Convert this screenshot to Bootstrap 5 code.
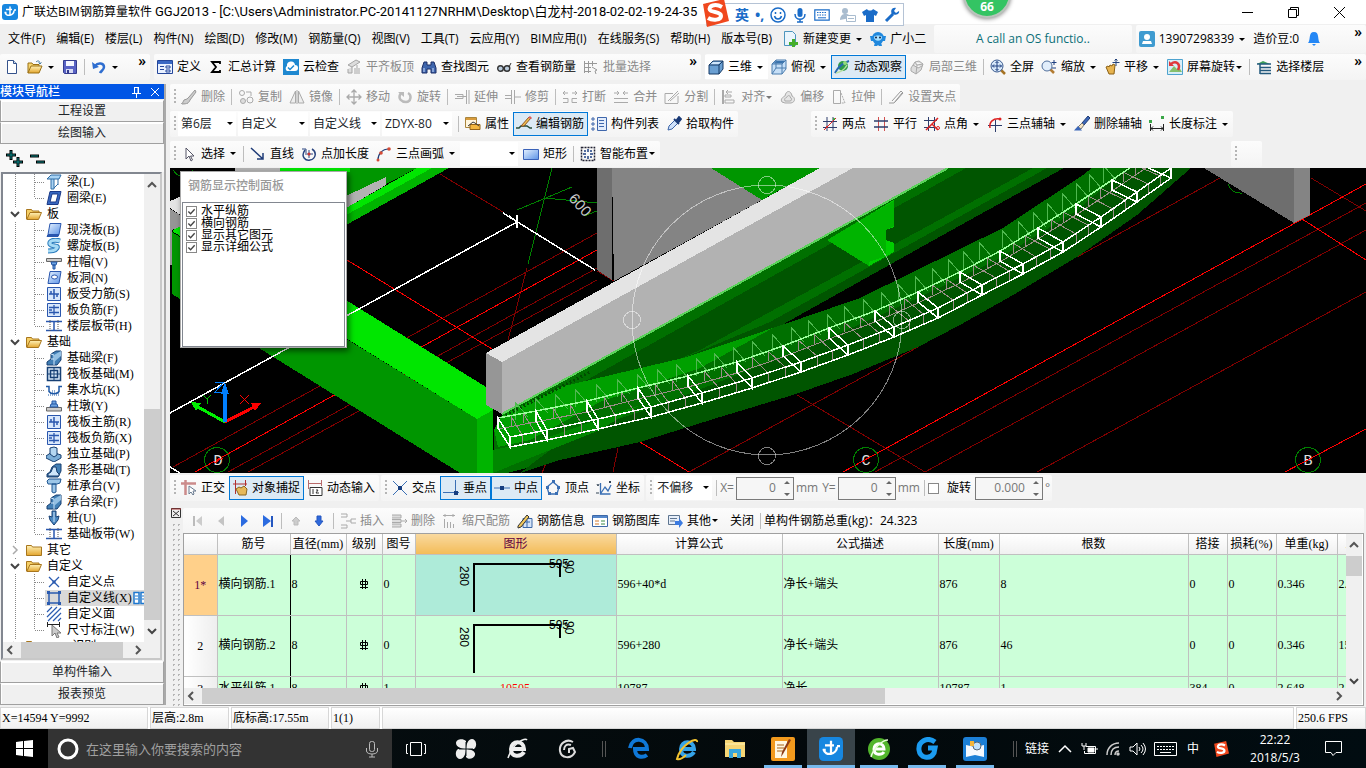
<!DOCTYPE html>
<html lang="zh-CN">
<head>
<meta charset="utf-8">
<meta name="viewport" content="width=device-width, initial-scale=1">
<title>广联达BIM钢筋算量软件 GGJ2013</title>
<link href="https://cdn.jsdelivr.net/npm/bootstrap@5.3.0/dist/css/bootstrap.min.css" rel="stylesheet">
<style>
:root{--ui:"Open Sans","Noto Sans CJK SC",sans-serif;--song:"Liberation Serif","Noto Sans CJK SC",serif}
body{font:12px/16px var(--ui);color:#000;background:#f0f0f0}
button,input,select{font:inherit;color:inherit}
svg{flex:none;display:block}
use{fill:none}
.ic{width:16px;height:16px}
.song{font-family:var(--song)}
.titlebar{height:24px;background:#fff;padding-left:2px;z-index:3}
.titlebar h1{font-size:12px;line-height:16px;font-weight:400}
.titlebar h1 span{font-family:Roboto,"Noto Sans CJK SC",sans-serif;font-size:13px}
.winbtn{width:46px;height:20px;padding:0;border:0;border-radius:0}
.ime{left:706px;top:3px;height:23px;background:#fff;border:1px solid #b5c3d5;padding:0 3px 0 28px;gap:6px;color:#1a6cc8}
.ime b{font-size:14px}
.imelogo{left:-6px;top:-5px}
.ball{left:963px;top:-30px;width:48px;height:48px;border:2px solid #b9c4bb;background:#34c463;color:#fff;font-weight:700;padding-top:27px;box-shadow:0 1px 4px #888}
.menubar{height:30px}
.menubar a{color:#000;text-decoration:none;margin-right:11px}
.menubar .strip{height:28px}
.strip{background:linear-gradient(#fcfcfc,#f4f4f4);height:26px;border-radius:2px}
.callout{color:#0b6f78}
.tb{--bs-btn-border-radius:0;display:inline-flex;align-items:center;gap:4px;height:24px;padding:0 4px 0 3px;border:0;font-size:12px;line-height:16px;color:#000;white-space:nowrap;flex:none}
.tb:disabled,.tb.off{opacity:1;color:#8a8a8a;border:0}
.tb.on{background:#dceaf5;box-shadow:inset 0 0 0 1px #0078d7}
.tb.whitebox{background:#fff}
.car{width:8px;display:flex;justify-content:center}
.car::after{content:"";border:3px solid transparent;border-top-color:#000;border-bottom:0}
.off .car::after{border-top-color:#777}
.tight{margin-left:-4px}
.vsep{width:1px;height:16px;background:#bdbdbd;margin:0 3px 0 2px;flex:none}
.grip{width:2px;height:16px;margin:0 2px 0 4px;flex:none;background:repeating-linear-gradient(#b5b5b5 0 2px,transparent 2px 4px)}
.more{font-size:14px;font-weight:600;line-height:12px;align-self:flex-start;padding:1px 4px;border:0;background:none}
.pick{height:24px;border:0;border-radius:0;padding:0 12px 0 3px;margin-right:2px;font-size:12px;line-height:16px;width:70px;background-color:#fff;background-size:6px 4px;background-position:right 3px center;--bs-form-select-bg-img:url("data:image/svg+xml,%3Csvg xmlns='http://www.w3.org/2000/svg' viewBox='0 0 6 4'%3E%3Cpath d='M0 0h6L3 3z'/%3E%3C/svg%3E")}
.pick.narrow{width:58px}
.side{width:166px;margin-bottom:2px;border-right:2px solid #a9a9a9;background:#f0f0f0}
.sidehead{height:15px;margin:0 0 1px;background:#0055e5;color:#fff;font-size:12px;line-height:15px}
.fold{height:22px;flex:none;border:1px solid #a0a0a0;border-top-color:#fff;box-shadow:inset 1px 1px #fff;border-radius:0;padding:0;font-size:12px;line-height:18px;background:#f0f0f0;width:100%}
.treebox{border:2px solid #828790;border-right-color:#c8c8c8;border-bottom-color:#c8c8c8;background:#fff;margin:0 2px 1px 1px}
.tree{line-height:16px;background:repeating-linear-gradient(#888 0 1px,transparent 1px 2px) 12px 0/1px 100% no-repeat}
.twig{height:16px;display:flex;align-items:center;white-space:nowrap}
.twig>.arrow{width:14px;height:14px;margin:0 4px 0 5px;background:#fff}
.twig>.ic{margin-right:5px}
.kids{padding-left:32px;background:repeating-linear-gradient(#888 0 1px,transparent 1px 2px) 31px 0/1px calc(100% - 8px) no-repeat}
.kids>li{height:16px;display:flex;align-items:center;white-space:nowrap}
.kids>li::before{content:"";width:10px;height:1px;flex:none;background:repeating-linear-gradient(90deg,#888 0 1px,transparent 1px 2px)}
.kids>li>.ic{margin:0 5px 0 1px}
.kids>li.sel{background:linear-gradient(#d9d9d9,#d9d9d9) 10px 0 no-repeat}
.vs{width:16px;background:#f0f0f0}
.hs{height:16px;background:#f0f0f0}
.thumb{background:#cdcdcd}
.scene{min-height:0;background:#000}
.float{left:10px;top:3px;width:167px;height:177px;background:#fff;border:1px solid #aaa;box-shadow:2px 3px 6px #0008}
.float h2{font-size:12px;line-height:16px;color:#9a9a9a;padding:6px 0 8px 7px;margin:0}
.float .box{border:1px solid #828790;margin:0 1px;padding:2px 3px}
.opt{height:12px;line-height:12px;display:flex;align-items:center;gap:4px}
.opt .form-check-input,.sq{width:11px;height:11px;margin:0;border:1px solid #888;border-radius:0!important;background-color:#fff}
.opt .form-check-input:checked{border-color:#888;background-color:#fff;--bs-form-check-bg-image:url("data:image/svg+xml,%3Csvg xmlns='http://www.w3.org/2000/svg' viewBox='0 0 10 10'%3E%3Cpath fill='none' stroke='%23444' stroke-width='1.5' d='M1.500 5l2.500 2.500 4.500-5'/%3E%3C/svg%3E")}
.snap{height:32px;padding:2px 0 4px 0}
.snap .strip{height:26px;margin-right:2px}
.num{height:23px;width:58px;border:1px solid #7a7a7a;background:#f6f6f6;color:#888}
.num.wide{width:68px}
.num input{width:100%;min-width:0;border:0;background:none;text-align:right;padding:0 5px 0 0;color:#777;font-size:12px;appearance:textfield;-moz-appearance:textfield}
.num input::-webkit-inner-spin-button{display:none}
.unit{color:#777;font-size:12px;padding:0 2px}
.sheet{height:202px;padding:3px 2px 1px 0}
.rail{width:10px;margin:0 2px 0 1px}
.dots{background:radial-gradient(circle,#b5b5b5 1px,transparent 1px) 0 0/5px 5px}
.sheet .strip{height:25px}
.frame{border:1px solid #a0a0a0;background:#fff;min-height:0;padding:0 1px 1px 0}
.grid{table-layout:fixed;width:1214px;border-collapse:collapse;font-family:var(--song);line-height:14px}
.grid th{height:20px;font-weight:400;text-align:center;background:linear-gradient(#fff,#f0f0f0);border:1px solid #c0c0c0;border-width:0 1px 1px 0;padding:0;white-space:nowrap;overflow:hidden}
.grid thead th{line-height:18px}
.grid td{height:61px;background:#ccffd9;border:1px solid #c0c0c0;border-width:0 1px 1px 0;padding:0 2px 2px 1px;white-space:nowrap}
.grid tbody th{background:linear-gradient(90deg,#fff,#eee)}
.grid .cur{background:linear-gradient(#f9d99f,#f3bc58);color:#600040}
.grid tbody th.cur{background:#ffd08a}
.grid td.hit{background:#aeebd9}
.grid .lock{border-right-color:#000}
.grid .last td,.grid .last th{height:26px}
.grid .alert-num{color:#f00;text-align:center}
.grid svg text{font:12px "Liberation Sans",sans-serif}
.c33{width:33px}.c36{width:36px}.c39{width:39px}.c49{width:49px}.c56{width:56px}.c61{width:61px}.c73{width:73px}.c156{width:156px}.c166{width:166px}.c189{width:189px}.c201{width:201px}
.status{height:22px;gap:2px;background:#fff}
.status span{border:1px solid #d7d7d7;background:linear-gradient(#fff,#f0f0f0);padding:2px 1px;white-space:nowrap}
.s50{width:49px}.s70{width:70px}.s78{width:79px}.s98{width:98px}.s148{width:148px}
.task{height:39px;background:linear-gradient(90deg,#060f12,#03090b 60%,#010c11);color:#fff}
.task .btn{border:0;border-radius:0;padding:0;height:39px;width:48px;flex:none;display:flex;align-items:center;justify-content:center;color:#fff;font-size:12px}
.task .btn.w50{width:51px}
.task .run{background:linear-gradient(#76b9ed,#76b9ed) center bottom/38px 3px no-repeat}
.task .now{background:linear-gradient(#76b9ed,#76b9ed) center bottom/48px 3px no-repeat #39444a}
.task .tray{width:24px}
.task .note{margin-right:21px}
.start{background:#000}
.find{width:344px;background:#333;padding:0 12px 0 8px;gap:4px}
.find input{border:0;background:none;min-width:0;color:#ccc;font-size:13px}
.find input::placeholder{color:#a0a0a0;opacity:1}
.clock{width:84px;line-height:18px;padding-right:8px}
.g24{width:24px;height:24px}
</style>
</head>
<body class="vh-100 d-flex flex-column overflow-hidden">

<svg width="0" height="0" class="position-absolute" aria-hidden="true">
<defs>
<linearGradient id="gb" x2="1" y2="1"><stop stop-color="#e6f2ff"/><stop offset="1" stop-color="#5c93e6"/></linearGradient>
<linearGradient id="gy" x2="0" y2="1"><stop stop-color="#fff2b8"/><stop offset="1" stop-color="#e3a52d"/></linearGradient>
</defs>
<g>
<symbol id="app" viewBox="0 0 16 16"><rect width="16" height="16" rx="3" fill="#1787e0"/><path d="M8 2.500v9M4 5.500h6M12 6.500c0 5-8 7-9 1.500M12 6h2M2.500 8.500h2" stroke="#fff" stroke-width="1.500"/></symbol>
<symbol id="new" viewBox="0 0 16 16"><path d="M3.500 1.500h6l3 3v10h-9z" fill="#fff" stroke="#35528c"/><path d="M9.500 1.500v3h3" stroke="#35528c" fill="#cde"/></symbol>
<symbol id="open" viewBox="0 0 16 16"><path d="M1 14V4h4l1 1.500h6V8" fill="#f7d670" stroke="#9a7116"/><path d="M1 14l3-7h11l-3 7z" fill="url(#gy)" stroke="#9a7116"/><path d="M9 3c2-2 4-1 4 1.500M11.500 3.500L13 5l1.500-1.500" stroke="#457ba3"/></symbol>
<symbol id="save" viewBox="0 0 16 16"><path d="M1.500 1.500h13v13h-12l-1-1z" fill="#5963c5" stroke="#343c8e"/><path d="M4 2h8v5H4z" fill="#f4f6ff"/><path d="M4 10h7v4H4z" fill="#d7daf4"/><path d="M5 11h2v3H5z" fill="#343c8e"/></symbol>
<symbol id="undo" viewBox="0 0 16 16"><path d="M4 7c3-4 9-3 9 1 0 3-3 4-4 6" stroke="#2f6ed0" stroke-width="2.500"/><path d="M1 3l1 7 6-2z" fill="#2f6ed0"/></symbol>
<symbol id="def" viewBox="0 0 16 16"><path d="M.500 1.500h15v13H.500z" fill="#e9f1ff" stroke="#24469a"/><path d="M1 2h14v3H1z" fill="#3a68c4"/><path d="M3 7.500h4M3 10.500h4M9 7h4v2H9zM9 11h4v2H9z" stroke="#24469a"/></symbol>
<symbol id="sum" viewBox="0 0 16 16"><path d="M12 5V3H4l4 5-4 5h8v-2" stroke="#000" stroke-width="1.800"/></symbol>
<symbol id="cloud" viewBox="0 0 16 16"><rect width="16" height="16" fill="#1e88d0"/><path d="M4 12a3 3 0 010-5 4 4 0 018-1 3 3 0 010 6z" fill="#fff"/><path d="M5 8.500l2 2 4-4" stroke="#1e88d0" stroke-width="1.500"/></symbol>
<symbol id="plate" viewBox="0 0 16 16"><path d="M2 6l8-5 4 2-8 5zM6 8v6H2v-4M8 10h6M8 12h6M8 14h6M11 6v3" stroke="#a5a5a5" fill="#ddd"/></symbol>
<symbol id="bino" viewBox="0 0 16 16"><path d="M3 3h3v3h4V3h3l2 6v5h-5v-4H6v4H1V9z" fill="#3e65ac" stroke="#1d2f66"/><path d="M3 9v4M12 9v4" stroke="#cfe0ff"/></symbol>
<symbol id="glass" viewBox="0 0 16 16"><circle cx="4.500" cy="9.500" r="2.800" stroke="#333" fill="#bcd" stroke-width="1.400"/><circle cx="11" cy="9.500" r="2.800" stroke="#333" fill="#bcd" stroke-width="1.400"/><path d="M7 9h2M13 8l2-4" stroke="#333"/></symbol>
<symbol id="batch" viewBox="0 0 16 16"><path d="M1.500 2v12M5.500 2v12M9.500 2v5M1 4.500h13M1 8.500h7M1 12.500h7M9 8l5 3-2 1 1 3" stroke="#999"/></symbol>
<symbol id="cube" viewBox="0 0 16 16"><path d="M1 6l4-4h10v8l-4 5H1z" fill="#6a9fd2" stroke="#173b66"/><path d="M2 5.500L5 3h8l-3 2.500z" fill="#d0e6fb"/><path d="M1 6h10v9M11 6l4-4" stroke="#173b66"/></symbol>
<symbol id="top" viewBox="0 0 16 16"><path d="M1 5l4-4h10v9l-4 5H1z" fill="#c6dff7" stroke="#4a7cae"/><path d="M2 4.500L5 2h9l-3 2.500z" fill="#3973ad"/><path d="M1 5h10v10M11 5l4-4M5 1v8h10M5 9l-4 6" stroke="#4a7cae"/></symbol>
<symbol id="orbit" viewBox="0 0 16 16"><circle cx="9" cy="7" r="5" fill="#2f9b4a"/><path d="M1 14C4 8 9 4 15 2" stroke="#2769b0" stroke-width="2"/><path d="M2 14c5-1 9-4 11-8" stroke="#b8e0a0" stroke-width="1.500"/><circle cx="11" cy="4" r="2" fill="#93db7c"/></symbol>
<symbol id="part3d" viewBox="0 0 16 16"><path d="M2 9l4-6 4-1 4 3-2 6-5 4-5-3zM6 3l2 3 6-1M8 6l-1 9M4 6l5 3 4-2" fill="#ddd" stroke="#aaa"/></symbol>
<symbol id="full" viewBox="0 0 16 16"><path d="M11 11l4 4" stroke="#a57224" stroke-width="2.500"/><circle cx="7" cy="7" r="6" fill="#d8e9fa" stroke="#39598e"/><path d="M7 2.500v9M2.500 7h9M5.500 4L7 2.500 8.500 4M5.500 10L7 11.500 8.500 10M4 5.500L2.500 7 4 8.500M10 5.500L11.500 7 10 8.500" stroke="#1e3f80"/></symbol>
<symbol id="zoom" viewBox="0 0 16 16"><path d="M9 10l4 4" stroke="#b27b32" stroke-width="2.500"/><circle cx="6" cy="7" r="5" fill="#e2eefb" stroke="#51709d"/><path d="M13 1v5M10.500 3.500h5M11 9h4" stroke="#1e3f80"/></symbol>
<symbol id="pan" viewBox="0 0 16 16"><path d="M2 8l2-1 1 1 1-2 2 1 1-2 2 1-1 9H5z" fill="#e7b450" stroke="#8b6117"/><path d="M12 0v7M8.500 3.500h7M10.500 1.500L12 0l1.500 1.500" stroke="#22427a"/></symbol>
<symbol id="rot" viewBox="0 0 16 16"><path d="M.500.500h15v15H.500z" fill="#d8eef8" stroke="#4ea3cf"/><path d="M2 13l5-6 3 3 2-2 3 5z" fill="#86c06d"/><path d="M4 5c5-4 10 0 7 6" stroke="#e0383c" stroke-width="2.500"/><path d="M2 2v5h5z" fill="#e0383c"/></symbol>
<symbol id="floors" viewBox="0 0 16 16"><path d="M1 5l6-3 7 3z" fill="#3fa15b"/><path d="M1 5h14M4 8.500h11M4 11.500h11M4 14.500h11M4 5v10" stroke="#23597d" stroke-width="1.500"/></symbol>
<symbol id="brush" viewBox="0 0 16 16"><path d="M14 1L8 8l-2 2-3 1-2 4c5 0 7-1 8-4l6-8z" fill="#ccc" stroke="#999"/><path d="M0 14.500h7" stroke="#aaa"/></symbol>
<symbol id="copy" viewBox="0 0 16 16"><circle cx="4" cy="4" r="2.500" stroke="#aaa"/><circle cx="5" cy="12" r="2.500" fill="#ddd" stroke="#aaa"/><circle cx="12" cy="11" r="3" stroke="#aaa"/><path d="M8 3h5v4" stroke="#aaa"/></symbol>
<symbol id="mir" viewBox="0 0 16 16"><path d="M6.500 2v12H1zM9.500 2v12H15zM8 1v14" stroke="#aaa" fill="#eee"/></symbol>
<symbol id="move" viewBox="0 0 16 16"><path d="M8 1v14M1 8h14M5.500 3.500L8 1l2.500 2.500M5.500 12.500L8 15l2.500-2.500M3.500 5.500L1 8l2.500 2.500M12.500 5.500L15 8l-2.500 2.500" stroke="#aaa" stroke-width="1.300"/></symbol>
<symbol id="spin" viewBox="0 0 16 16"><path d="M4 4c-4 6 1 9 5 9 5 0 6-7 2-9" stroke="#bbb" stroke-width="2.500"/><path d="M1 3h6v5z" fill="#bbb"/></symbol>
<symbol id="ext" viewBox="0 0 16 16"><path d="M12.500 1v14M15 1v14M1 5.500h8v4H1M3 7.500h9" stroke="#aaa"/></symbol>
<symbol id="trim" viewBox="0 0 16 16"><path d="M6.500 1v14M9.500 1v14M0 6.500h6M0 9.500h6M10 8h6" stroke="#aaa"/></symbol>
<symbol id="brk" viewBox="0 0 16 16"><path d="M1 9.500h5v4H1M15 9.500h-5v4h5M1 4h5M10 4h5M3 2L1 4l2 2M13 2l2 2-2 2" stroke="#aaa"/></symbol>
<symbol id="mrg" viewBox="0 0 16 16"><path d="M1 9.500h14M1 13.500h14M1 4h5M10 4h5M4 2l2 2-2 2M12 2l-2 2 2 2" stroke="#aaa"/></symbol>
<symbol id="split" viewBox="0 0 16 16"><path d="M1 4.500h8M1 14.500h13M1 4.500v10M14 7v7M4 12l10-10M6 12l9-8" stroke="#aaa"/></symbol>
<symbol id="align" viewBox="0 0 16 16"><path d="M2 1v14" stroke="#aaa" stroke-width="2"/><path d="M4 6h6v2H4zM4 11h9v3H4zM5 3h6M7 1L5 3l2 2" stroke="#aaa"/></symbol>
<symbol id="off1" viewBox="0 0 16 16"><path d="M2 13c-2-3 1-5 3-6 1-6 6-6 7 0 3 1 4 6-1 7H5zM5 12c-1-2 0-3 2-4 1-2 3-2 3 0 2 1 2 4 0 4z" stroke="#aaa" fill="#e5e5e5"/></symbol>
<symbol id="str" viewBox="0 0 16 16"><path d="M2.500 1.500h7v13h-7z" stroke="#aaa"/><path d="M10 4l4 10H9" stroke="#aaa" stroke-dasharray="2 1"/></symbol>
<symbol id="clip" viewBox="0 0 16 16"><path d="M1 14h5l8-10M4 12l9-10 2 2-8 9" stroke="#999"/></symbol>
<symbol id="prop" viewBox="0 0 16 16"><path d="M.500 1.500h11v10H.500z" fill="#fff6de" stroke="#a9853e"/><path d="M1 2h10v2H1z" fill="#d89b3c"/><path d="M5 8.500h10v5H5z" fill="#f3b740" stroke="#94641a"/><path d="M3 10l5-4 2 1 4 3" stroke="#3d3d3d"/></symbol>
<symbol id="edit" viewBox="0 0 16 16"><path d="M0 12h3l2-2h6l3 2h2" stroke="#274b37" stroke-width="1.500"/><path d="M5 10l8-9 2 1-7 8z" fill="#f2c050" stroke="#8d5323"/><path d="M12 2l2-2 2 2-1 1z" fill="#dc5b5b"/></symbol>
<symbol id="list" viewBox="0 0 16 16"><path d="M6.500 1.500h9v13h-9z" fill="#e4edfb" stroke="#3f67ac"/><path d="M8 4.500h5M8 7.500h5M8 10.500h5M1 2h2v2H1zM1 7h2v2H1zM1 12h2v2H1z" stroke="#3f67ac"/></symbol>
<symbol id="drop" viewBox="0 0 16 16"><path d="M2 14l1-4 6-6 3 3-6 6z" fill="#cfe1fa" stroke="#3b64a8"/><path d="M8 3l5 5M10 5l3-4 2 2-3 4z" stroke="#1a3a77" stroke-width="1.800" fill="#1a3a77"/></symbol>
<symbol id="ax2" viewBox="0 0 16 16"><path d="M5 1v14M11 1v14M1 5.500h14M1 11.500h14" stroke="#2d3c6b"/><path d="M2 14L14 2" stroke="#d22"/><circle cx="5" cy="11" r="1" fill="#d22"/><circle cx="12" cy="3" r="1" fill="#2a2"/></symbol>
<symbol id="axp" viewBox="0 0 16 16"><path d="M5.500 1v14M11.500 1v14" stroke="#d05050"/><path d="M1 5h14M1 11h14" stroke="#2d3c6b" stroke-width="1.300"/></symbol>
<symbol id="axa" viewBox="0 0 16 16"><path d="M4.500 1v14M10.500 1v14M0 4.500h13M0 11.500h10" stroke="#2d3c6b"/><path d="M2 14L14 2M8 8l6 6" stroke="#d22" stroke-width="1.500"/><circle cx="14" cy="12" r="1.500" stroke="#d22"/></symbol>
<symbol id="ax3" viewBox="0 0 16 16"><path d="M8.500 4v12M1 9.500h14" stroke="#2d3c6b"/><path d="M3 12C2 6 6 2 13 3" stroke="#d22" stroke-width="1.500"/><circle cx="13" cy="3" r="1.500" fill="#d22"/></symbol>
<symbol id="delax" viewBox="0 0 16 16"><path d="M14 0L8 7l2 2 6-7z" fill="#3b66b8" stroke="#203b70"/><path d="M8 7l-4 4 3 2 3-4z" fill="#f5e3c0" stroke="#777"/><path d="M0 14.500h8L4 10z" fill="#3b66b8"/></symbol>
<symbol id="dim" viewBox="0 0 16 16"><path d="M1.500 8v7M14.500 8v7M2 12.500h12M4 10.500L2 12.500l2 2M12 10.500l2 2-2 2" stroke="#222"/><path d="M0 4h3v3H0zM12 0h3v3h-3z" fill="#3aa648"/></symbol>
<symbol id="cur" viewBox="0 0 16 16"><path d="M5 2v11l3-3 2 5 1.500-1-2-4h3.500z" fill="#fff" stroke="#556"/></symbol>
<symbol id="line" viewBox="0 0 16 16"><path d="M1 2l12 11M13 7v6H7" stroke="#1f3c78" stroke-width="1.500"/></symbol>
<symbol id="ptlen" viewBox="0 0 16 16"><path d="M4 4c-5 7 1 11 5 10 6-1 7-8 2-11" stroke="#2a4580" stroke-width="1.500"/><path d="M4 8h8M8 4v8M1 3h4v4" stroke="#2a4580"/><circle cx="8" cy="8" r="1.500" fill="#c33"/></symbol>
<symbol id="arc" viewBox="0 0 16 16"><path d="M2 14C2 8 6 3 13 3" stroke="#1f3c78" stroke-width="1.200"/><circle cx="13" cy="3" r="1.800" fill="#d54a35"/><circle cx="5" cy="7" r="1.800" fill="#d54a35"/><circle cx="2" cy="14" r="1.500" fill="#d54a35"/></symbol>
<symbol id="rect" viewBox="0 0 16 16"><path d="M.500 3.500h15v10H.500z" fill="url(#gb)" stroke="#3a62b8"/></symbol>
<symbol id="smart" viewBox="0 0 16 16"><path d="M1.500 1.500h13v13h-13z" stroke="#223" stroke-dasharray="2 1" stroke-width="1.500"/><path d="M8 3v3M8 10v3M3 8h3M10 8h3M5 4v2M11 4v2M5 10v2M11 10v2" stroke="#1e3f80" stroke-width="1.500"/></symbol>
<symbol id="fold" viewBox="0 0 16 16"><path d="M.500 3.500h5l1 1.500h9v8.500H.500z" fill="url(#gy)" stroke="#a8761d"/></symbol>
<symbol id="foldo" viewBox="0 0 16 16"><path d="M.500 13V3.500h5l1 1.500H13v2" fill="#f5cf66" stroke="#a8761d"/><path d="M.800 13.500L4 6.500h11.500l-3 7z" fill="url(#gy)" stroke="#a8761d"/></symbol>
<symbol id="dn" viewBox="0 0 14 14"><path d="M3 5l4 4 4-4" stroke="#444" stroke-width="2"/></symbol>
<symbol id="up" viewBox="0 0 14 14"><path d="M3 9l4-4 4 4" stroke="#555" stroke-width="2"/></symbol>
<symbol id="rt" viewBox="0 0 14 14"><path d="M5 3l4 4-4 4" stroke="#555" stroke-width="2"/></symbol>
<symbol id="shut" viewBox="0 0 14 14"><path d="M5 3l4 4-4 4" stroke="#aaa" stroke-width="1.500"/></symbol>
<symbol id="lt" viewBox="0 0 14 14"><path d="M9 3L5 7l4 4" stroke="#555" stroke-width="2"/></symbol>
<symbol id="beam" viewBox="0 0 16 16"><path d="M1 5l4-4h10l-2 4H1zM5 5v10h3V5M12 5v6" fill="#a8d3f4" stroke="#2e6da6"/><path d="M8 14l4-4" stroke="#2e6da6"/></symbol>
<symbol id="ring" viewBox="0 0 16 16"><path d="M4 1.500h11l-3 13H1z" fill="#3767c0" stroke="#1b3a87"/><path d="M6 4h6l-2 8H4z" fill="#fff" stroke="#1b3a87"/></symbol>
<symbol id="slab" viewBox="0 0 16 16"><path d="M4 1.500h11l-2 11H2z" fill="url(#gb)" stroke="#2a57ae"/><path d="M2 12.500L1 14.500h11l1-2" fill="#2a57ae" stroke="#2a57ae"/></symbol>
<symbol id="spir" viewBox="0 0 16 16"><path d="M14 3C8 1 3 3 4 6c2 3 9 1 7 4s-5 3-9 3" stroke="#2b7cbd" stroke-width="5"/><path d="M14 3C8 1 3 3 4 6c2 3 9 1 7 4s-5 3-9 3" stroke="#a5daf5" stroke-width="3"/></symbol>
<symbol id="cap" viewBox="0 0 16 16"><path d="M.500 4.500h15v3H.500z" fill="#ccc" stroke="#666"/><path d="M5 8h6l-1 3H6zM7 11h2v4H7z" fill="#6ea3e0" stroke="#2456a4"/></symbol>
<symbol id="hole" viewBox="0 0 16 16"><path d="M4 1.500h11l-2 12H2z" fill="url(#gb)" stroke="#2a57ae"/><ellipse cx="8.500" cy="7" rx="3" ry="2" fill="#fff" stroke="#2a57ae"/></symbol>
<symbol id="bar1" viewBox="0 0 16 16"><path d="M1.500 1.500h13v13h-13z" fill="#d9e8fc" stroke="#2a57ae"/><path d="M8 3v10M3 8h10M5 5v3M11 8v3" stroke="#2a57ae" stroke-width="1.500"/></symbol>
<symbol id="bar2" viewBox="0 0 16 16"><path d="M1.500 1.500h13v13h-13z" fill="#d9e8fc" stroke="#2a57ae"/><path d="M8 3v10M3 5.500h10M3 10.500h10M3 8h3" stroke="#2a57ae" stroke-width="1.300"/></symbol>
<symbol id="band" viewBox="0 0 16 16"><path d="M0 3.500h16M0 12.500h16M8 4v8" stroke="#2a57ae" stroke-width="1.500"/><path d="M4 2v12M12 2v12" stroke="#555" stroke-dasharray="1 1"/></symbol>
<symbol id="fbeam" viewBox="0 0 16 16"><path d="M1 15v-3l4-3V4l5-3h5v9l-4 5z" fill="#427fb5" stroke="#173f70"/><path d="M5 9h3v6M5 4l3 1v4" stroke="#cfe6fa"/><path d="M8 5l7-4v5l-7 6z" fill="#94c0e3"/></symbol>
<symbol id="raft" viewBox="0 0 16 16"><path d="M1.500 1.500h13v13h-13zM4.500 4.500h7v7h-7z" fill="#d8e8f8" stroke="#174074" stroke-width="1.500"/><path d="M8 1v14M1 8h14" stroke="#174074"/></symbol>
<symbol id="pit" viewBox="0 0 16 16"><path d="M0 4.500h3v5c2 3 8 3 10 0v-5h3" stroke="#1e58a5" stroke-width="1.500"/><path d="M2 13h12M4 11h9M6 9h4" stroke="#1e58a5" stroke-dasharray="1 1"/></symbol>
<symbol id="pier" viewBox="0 0 16 16"><path d="M.500 9.500h15v3.500H.500z" fill="#ccc" stroke="#666"/><path d="M4 9l1-3h6l1 3zM6 6V3h4v3" fill="#6ea3e0" stroke="#2456a4"/></symbol>
<symbol id="iso" viewBox="0 0 16 16"><path d="M0 10l6-4 9 3v3l-7 4-8-4z" fill="#7baed8" stroke="#173f70"/><path d="M4 8V2l4-1 3 1v7l-3 2z" fill="#b4d7f2" stroke="#173f70"/></symbol>
<symbol id="strip1" viewBox="0 0 16 16"><path d="M1 15v-3l3-2 2-5 4-3h5v7l-3 6z" fill="#427fb5" stroke="#173f70"/><path d="M2 14v-2l3-2 2-5h3l1 5 2 2v2z" fill="#cfe6fa" stroke="#173f70"/></symbol>
<symbol id="cushion" viewBox="0 0 16 16"><path d="M1 3l2-2h12l-1 4-3 1H2zM6 6h4v8l-2 1-2-1z" fill="#9cc6e8" stroke="#1e5590"/></symbol>
<symbol id="pile" viewBox="0 0 16 16"><path d="M6 1h4v6l3-1-1 4-4 5-4-5-1-4 3 1z" fill="#4c8ac2" stroke="#174074"/><path d="M8 2v10" stroke="#cfe6fa"/></symbol>
<symbol id="xpt" viewBox="0 0 16 16"><path d="M3 3l10 10M13 3L3 13" stroke="#2a5bb0" stroke-width="1.300"/><path d="M6.500 6.500h3v3h-3z" fill="#2a5bb0"/></symbol>
<symbol id="cline" viewBox="0 0 16 16"><path d="M3 3h10v10H3z" stroke="#2a5bb0" stroke-width="1.500"/><path d="M1 1h3v3H1zM12 1h3v3h-3zM1 12h3v3H1zM12 12h3v3h-3z" fill="#2a5bb0"/></symbol>
<symbol id="hatch" viewBox="0 0 16 16"><path d="M1 6l5-5M1 11L11 1M2 15L15 2M7 15l8-8M12 15l3-3" stroke="#2a5bb0" stroke-width="1.200"/></symbol>
<symbol id="size" viewBox="0 0 16 16"><path d="M1.500 0v5M13.500 0v5M2 2.500h11" stroke="#222"/><path d="M6 3v11l3-3 2 5 2-1-2-4h4z" fill="#ccc" stroke="#777"/></symbol>
<symbol id="doc" viewBox="0 0 16 16"><path d="M2 2.500h5v11H2zM9 2.500h5v11H9z" fill="#fff" stroke="#1e78d0" stroke-width="1.500"/><path d="M3 6h3M3 9h3M10 6h3M10 9h3" stroke="#1e78d0"/></symbol>
<symbol id="ortho" viewBox="0 0 16 16"><path d="M0 3.500h15M4.500 0v15" stroke="#cb8b8b" stroke-width="2.500"/><path d="M8 6v8l2-2 2 3 1-1-1-3h3z" fill="#fff" stroke="#6a7b90"/></symbol>
<symbol id="osnap" viewBox="0 0 16 16"><path d="M1 4h14M3.500 0v14M13.500 0v6" stroke="#b03030"/><path d="M4 9l3-2 2 1 3-2 3 3-1 6H7z" fill="#e6b95a" stroke="#8a6520"/></symbol>
<symbol id="dyn" viewBox="0 0 16 16"><path d="M1.500 0v9M14.500 0v6M2 3.500h12" stroke="#b96b6b"/><path d="M3 7.500h12v8H3z" fill="#fff" stroke="#333"/><path d="M6 9v5M9 10h2l-2 3h3" stroke="#333"/></symbol>
<symbol id="inter" viewBox="0 0 16 16"><path d="M1 1l14 14M15 1L1 15" stroke="#3a6fb4"/><path d="M6 6h4v4H6z" fill="#173f80"/></symbol>
<symbol id="perp" viewBox="0 0 16 16"><path d="M0 12.500h16M12.500 0v13" stroke="#3a6fb4"/><path d="M11 11h4v4h-4z" fill="#173f80"/></symbol>
<symbol id="mid" viewBox="0 0 16 16"><path d="M0 8h16" stroke="#3a6fb4"/><path d="M6 6h4v4H6z" fill="#173f80"/></symbol>
<symbol id="vert" viewBox="0 0 16 16"><path d="M8 2l6 5-2 7H4L2 7z" stroke="#3a6fb4" stroke-width="1.300"/><path d="M7 0h3v3H7zM12 6h3v3h-3zM1 6h3v3H1zM3 12h3v3H3zM10 12h3v3h-3z" fill="#3a6fb4"/></symbol>
<symbol id="coord" viewBox="0 0 16 16"><path d="M4.500 3v11h10M5 13l4-6 3 4 3-6" stroke="#3a6fb4" stroke-width="1.300"/><path d="M1 4l1 2 1-2M13 1l2 2M15 1l-2 2M0 13h3" stroke="#345"/></symbol>
<symbol id="first" viewBox="0 0 16 16"><path d="M4 3v10" stroke="#bbb" stroke-width="2"/><path d="M12 3v10L6 8z" fill="#ccc"/></symbol>
<symbol id="prev" viewBox="0 0 16 16"><path d="M11 3v10L5 8z" fill="#c4c4c4"/></symbol>
<symbol id="next" viewBox="0 0 16 16"><path d="M5 2v12l7-6z" fill="#2b6be0"/></symbol>
<symbol id="end" viewBox="0 0 16 16"><path d="M13 3v11" stroke="#2457c0" stroke-width="2"/><path d="M4 2v12l8-6z" fill="#2b6be0"/></symbol>
<symbol id="aup" viewBox="0 0 16 16"><path d="M8 4l4 4h-2v4H6V8H4z" fill="#ccc" stroke="#bbb"/></symbol>
<symbol id="adn" viewBox="0 0 16 16"><path d="M8 13L4 8h2V3h4v5h2z" fill="#2f69db" stroke="#2457c0"/></symbol>
<symbol id="ins" viewBox="0 0 16 16"><path d="M1 1h6v3H1M1 12h6v3H1M16 6h-5v4h5M11 8H6" stroke="#aaa"/></symbol>
<symbol id="rem" viewBox="0 0 16 16"><path d="M1 2h9v3H1M1 11h9v3H1M1 6.500h9v3H1" stroke="#aaa" fill="#ddd"/><path d="M10 8h6M14 6l2 2-2 2" stroke="#aaa"/></symbol>
<symbol id="scl" viewBox="0 0 16 16"><path d="M1 2.500h12M3 1v3M11 1v3M2.500 6v9M5.500 9v6M8.500 9v6M11.500 11v4" stroke="#aaa"/></symbol>
<symbol id="info" viewBox="0 0 16 16"><path d="M6 5.500h9v9H6z" fill="#d5e4f8" stroke="#3c68a8"/><path d="M1 13l9-11 2 2-8 10-3 1z" fill="#f1c75c" stroke="#333"/><path d="M8 9h5M10 7v7" stroke="#3c68a8"/></symbol>
<symbol id="lib" viewBox="0 0 16 16"><path d="M.500 2.500h15v11H.500z" fill="#fff" stroke="#3c68a8"/><path d="M1 3h14v2H1z" fill="#5588cc"/><path d="M3 8h4M3 11h4" stroke="#d37b2f"/><path d="M9 8h4M9 11h4" stroke="#3c8c48"/></symbol>
<symbol id="oth" viewBox="0 0 16 16"><path d="M1.500 2.500h11v9h-11z" fill="#e7effa" stroke="#5e7590"/><path d="M3 5.500h7M3 8h5" stroke="#5e7590"/><path d="M8 8h4V5l4 5-4 5v-3H8z" fill="#3c7be0"/></symbol>
<symbol id="chg" viewBox="0 0 16 16"><path d="M1.500.500h8l3 3v11h-11z" fill="#eaf5fc" stroke="#4c95bd"/><path d="M9 8h3v3h3v3h-3v2H9v-2H6v-3h3z" fill="#45ad2b"/></symbol>
<symbol id="mas" viewBox="0 0 16 16"><circle cx="8" cy="7" r="6" fill="#2088dd"/><path d="M0 5h3v5H1zM13 5h3l-1 5h-2zM5 11h6l1 4H9l-1-1-1 1H4z" fill="#2088dd"/><path d="M4 6c0-2 8-2 8 0 0 5-8 5-8 0z" fill="#a8e0ff"/><circle cx="6" cy="6.500" r="1" fill="#124"/><circle cx="10" cy="6.500" r="1" fill="#124"/></symbol>
<symbol id="user" viewBox="0 0 16 16"><rect width="16" height="16" rx="2" fill="#3f9bd0"/><circle cx="8" cy="6" r="3" fill="#fff"/><path d="M3 13l1-3h8l1 3z" fill="#fff"/></symbol>
<symbol id="bell" viewBox="0 0 16 16"><path d="M2 12c3-3 0-11 6-11s3 8 6 11z" fill="#2487f5"/><path d="M6 13h4l-2 2z" fill="#2487f5"/></symbol>
<symbol id="sogou" viewBox="0 0 28 28"><path d="M2 5L23 0l5 22L6 28z" fill="#f0481e"/><path d="M21 8C14 4 7 7 9 11c2 3 11 1 11 6 0 4-8 5-13 2" stroke="#fff" stroke-width="4"/></symbol>
<symbol id="smile" viewBox="0 0 16 16"><circle cx="8" cy="8" r="7" stroke="#1a6cc8" stroke-width="1.500"/><path d="M4.500 9c1 4 6 4 7 0M5.500 5v2M10.500 5v2" stroke="#1a6cc8" stroke-width="1.500"/></symbol>
<symbol id="mic" viewBox="0 0 16 16"><rect x="5.500" y="1" width="5" height="9" rx="2.500" fill="currentColor"/><path d="M3 7c0 7 10 7 10 0M8 12v3M5 15h6" stroke="currentColor" stroke-width="1.500"/></symbol>
<symbol id="kbd" viewBox="0 0 16 16"><path d="M.800 2.800h14.400v10.400H.800z" stroke="currentColor" stroke-width="1.200"/><path d="M3 5.500h10M3 8h10" stroke="currentColor" stroke-dasharray="1.500 1"/><path d="M4 10.800h8" stroke="currentColor"/></symbol>
<symbol id="pers" viewBox="0 0 16 16"><circle cx="5" cy="4" r="3" fill="#a9bccf"/><path d="M0 13c0-8 10-8 10-2z" fill="#a9bccf"/><path d="M6.500 8.500h9v6h-9z" fill="#fff" stroke="#a9bccf"/><path d="M8 11.500h6" stroke="#a9bccf"/></symbol>
<symbol id="shirt" viewBox="0 0 16 16"><path d="M5 2c1 2 5 2 6 0l5 3-2 4-2-1v7H4V8L2 9 0 5z" fill="#1a6cc8"/></symbol>
<symbol id="wrench" viewBox="0 0 16 16"><path d="M2 14l7-7" stroke="#1a6cc8" stroke-width="3"/><path d="M15 4l-3 2-2-2 2-3c-4-1-6 3-4 6 3 2 8 0 7-3z" fill="#1a6cc8"/></symbol>
<symbol id="grade" viewBox="0 0 10 10"><path d="M3.500 0v10M6.500 0v10M1 8.500h8M1.500 2.500h7v3h-7z" stroke="#000"/></symbol>
</g>
</svg>

<header class="titlebar d-flex align-items-center position-relative flex-shrink-0">
  <svg class="ic me-1"><use href="#app"/></svg>
  <h1 class="m-0 flex-fill text-nowrap">广联达BIM钢筋算量软件 <span>GGJ2013 - [C:\Users\Administrator.PC-20141127NRHM\Desktop\白龙村-2018-02-02-19-24-35</span></h1>
  <button class="btn winbtn" aria-label="最小化"><svg class="m-auto" width="11" height="11"><path d="M0 5.500h11" stroke="#000"/></svg></button>
  <button class="btn winbtn" aria-label="还原"><svg class="m-auto" width="11" height="11" fill="none" stroke="#000"><path d="M.500 2.500h8v8h-8zM2.500 2V.500h8v8H9"/></svg></button>
  <button class="btn winbtn me-1" aria-label="关闭"><svg class="m-auto" width="11" height="11" stroke="#000"><path d="M0 0l11 11M11 0L0 11"/></svg></button>
  <div class="ime position-absolute d-flex align-items-center">
    <svg class="imelogo position-absolute" width="28" height="28"><use href="#sogou"/></svg>
    <b>英</b><b>•,</b>
    <svg class="ic"><use href="#smile"/></svg><svg class="ic"><use href="#mic"/></svg><svg class="ic"><use href="#kbd"/></svg>
    <svg class="ic ms-1"><use href="#pers"/></svg><svg class="ic"><use href="#shirt"/></svg><svg class="ic"><use href="#wrench"/></svg>
  </div>
  <div class="ball position-absolute rounded-circle text-center">66</div>
</header>

<nav class="menubar d-flex align-items-center text-nowrap flex-shrink-0">
  <div class="d-flex ps-2">
    <a href="#">文件(F)</a><a href="#">编辑(E)</a><a href="#">楼层(L)</a><a href="#">构件(N)</a><a href="#">绘图(D)</a><a href="#">修改(M)</a><a href="#">钢筋量(Q)</a><a href="#">视图(V)</a><a href="#">工具(T)</a><a href="#">云应用(Y)</a><a href="#">BIM应用(I)</a><a href="#">在线服务(S)</a><a href="#">帮助(H)</a><a href="#">版本号(B)</a>
  </div>
  <button class="btn tb ps-0"><svg class="ic"><use href="#chg"/></svg>新建变更<span class="car"></span></button>
  <button class="btn tb"><svg class="ic"><use href="#mas"/></svg>广小二</button>
  <div class="strip callout ms-1 d-flex align-items-center justify-content-center flex-fill me-1">A call an OS functio..</div>
  <div class="strip d-flex align-items-center">
    <button class="btn tb"><svg class="ic"><use href="#user"/></svg>13907298339<span class="car"></span></button>
    <button class="btn tb">造价豆:0</button>
    <button class="btn tb me-4" aria-label="通知"><svg class="ic"><use href="#bell"/></svg></button>
    <button class="more">»</button>
  </div>
</nav>

<div class="d-flex gap-1 flex-shrink-0 pb-1" style="height:30px">
  <div class="strip d-flex align-items-center ps-1" style="width:150px">
    <button class="btn tb px-0 me-1" aria-label="新建"><svg class="ic"><use href="#new"/></svg></button>
    <button class="btn tb" aria-label="打开"><svg class="ic"><use href="#open"/></svg><span class="car"></span></button>
    <button class="btn tb" aria-label="保存"><svg class="ic"><use href="#save"/></svg></button>
    <span class="vsep"></span>
    <button class="btn tb" aria-label="撤销"><svg class="ic"><use href="#undo"/></svg><span class="car"></span></button>
    <button class="more ms-auto">»</button>
  </div>
  <div class="strip d-flex align-items-center" style="width:547px">
    <button class="btn tb"><svg class="ic"><use href="#def"/></svg>定义</button>
    <button class="btn tb"><svg class="ic"><use href="#sum"/></svg>汇总计算</button>
    <button class="btn tb"><svg class="ic"><use href="#cloud"/></svg>云检查</button>
    <button class="btn tb" disabled><svg class="ic"><use href="#plate"/></svg>平齐板顶</button>
    <button class="btn tb"><svg class="ic"><use href="#bino"/></svg>查找图元</button>
    <button class="btn tb"><svg class="ic"><use href="#glass"/></svg>查看钢筋量</button>
    <button class="btn tb" disabled><svg class="ic"><use href="#batch"/></svg>批量选择</button>
    <button class="more ms-auto">»</button>
  </div>
  <div class="strip d-flex align-items-center flex-fill">
    <button class="btn tb whitebox"><svg class="ic"><use href="#cube"/></svg>三维<span class="car"></span></button>
    <button class="btn tb"><svg class="ic"><use href="#top"/></svg>俯视<span class="car"></span></button>
    <button class="btn tb on"><svg class="ic"><use href="#orbit"/></svg>动态观察</button>
    <button class="btn tb" disabled><svg class="ic"><use href="#part3d"/></svg>局部三维</button>
    <span class="vsep"></span>
    <button class="btn tb"><svg class="ic"><use href="#full"/></svg>全屏</button>
    <button class="btn tb"><svg class="ic"><use href="#zoom"/></svg>缩放<span class="car"></span></button>
    <button class="btn tb"><svg class="ic"><use href="#pan"/></svg>平移<span class="car"></span></button>
    <button class="btn tb"><svg class="ic"><use href="#rot"/></svg>屏幕旋转<span class="car tight"></span></button>
    <span class="vsep"></span>
    <button class="btn tb"><svg class="ic"><use href="#floors"/></svg>选择楼层</button>
    <button class="more ms-auto">»</button>
  </div>
</div>

<main class="d-flex flex-fill" style="min-height:0">
  <aside class="side d-flex flex-column flex-shrink-0 me-1">
    <h2 class="sidehead d-flex align-items-center flex-shrink-0 pe-1">模块导航栏
      <svg class="ms-auto me-2" width="12" height="12" fill="none" stroke="#fff"><path d="M4 1.500h5M4.500 2v5M8.500 2v5M8 2v5M2 7.500h9M6.500 8v4"/></svg>
      <svg width="10" height="10" stroke="#fff"><path d="M1 1l8 8M9 1L1 9"/></svg></h2>
    <button class="btn fold">工程设置</button>
    <button class="btn fold">绘图输入</button>
    <div class="d-flex align-items-center ps-1 flex-shrink-0" style="height:28px;background:#f8f8f8">
      <svg width="42" height="18" fill="none"><path d="M2 6h10M7 1v10M9 13h10M14 8v10" stroke="#000" stroke-width="3"/><path d="M3 6h8M7 2v8M10 13h8M14 9v8" stroke="#0a8a8a"/><path d="M26 7h9M32 13h9" stroke="#000" stroke-width="3"/><path d="M27 7h7M33 13h7" stroke="#0a8a8a"/></svg>
    </div>
    <div class="treebox flex-fill d-flex flex-column overflow-hidden song" style="min-height:0">
      <div class="d-flex flex-fill overflow-hidden" style="min-height:0">
        <ul class="tree list-unstyled m-0 flex-fill overflow-hidden">
          <li><ul class="kids list-unstyled">
            <li><svg class="ic"><use href="#beam"/></svg>梁(L)</li>
            <li><svg class="ic"><use href="#ring"/></svg>圈梁(E)</li></ul></li>
          <li><div class="twig"><svg class="arrow"><use href="#dn"/></svg><svg class="ic"><use href="#foldo"/></svg>板</div>
            <ul class="kids list-unstyled">
            <li><svg class="ic"><use href="#slab"/></svg>现浇板(B)</li>
            <li><svg class="ic"><use href="#spir"/></svg>螺旋板(B)</li>
            <li><svg class="ic"><use href="#cap"/></svg>柱帽(V)</li>
            <li><svg class="ic"><use href="#hole"/></svg>板洞(N)</li>
            <li><svg class="ic"><use href="#bar1"/></svg>板受力筋(S)</li>
            <li><svg class="ic"><use href="#bar2"/></svg>板负筋(F)</li>
            <li><svg class="ic"><use href="#band"/></svg>楼层板带(H)</li></ul></li>
          <li><div class="twig"><svg class="arrow"><use href="#dn"/></svg><svg class="ic"><use href="#foldo"/></svg>基础</div>
            <ul class="kids list-unstyled">
            <li><svg class="ic"><use href="#fbeam"/></svg>基础梁(F)</li>
            <li><svg class="ic"><use href="#raft"/></svg>筏板基础(M)</li>
            <li><svg class="ic"><use href="#pit"/></svg>集水坑(K)</li>
            <li><svg class="ic"><use href="#pier"/></svg>柱墩(Y)</li>
            <li><svg class="ic"><use href="#bar1"/></svg>筏板主筋(R)</li>
            <li><svg class="ic"><use href="#bar2"/></svg>筏板负筋(X)</li>
            <li><svg class="ic"><use href="#iso"/></svg>独立基础(P)</li>
            <li><svg class="ic"><use href="#strip1"/></svg>条形基础(T)</li>
            <li><svg class="ic"><use href="#cushion"/></svg>桩承台(V)</li>
            <li><svg class="ic"><use href="#fbeam"/></svg>承台梁(F)</li>
            <li><svg class="ic"><use href="#pile"/></svg>桩(U)</li>
            <li><svg class="ic"><use href="#band"/></svg>基础板带(W)</li></ul></li>
          <li class="twig"><svg class="arrow"><use href="#shut"/></svg><svg class="ic"><use href="#fold"/></svg>其它</li>
          <li><div class="twig"><svg class="arrow"><use href="#dn"/></svg><svg class="ic"><use href="#foldo"/></svg>自定义</div>
            <ul class="kids list-unstyled">
            <li><svg class="ic"><use href="#xpt"/></svg>自定义点</li>
            <li class="sel"><svg class="ic"><use href="#cline"/></svg>自定义线(X)<svg class="ic m-0"><use href="#doc"/></svg></li>
            <li><svg class="ic"><use href="#hatch"/></svg>自定义面</li>
            <li><svg class="ic"><use href="#size"/></svg>尺寸标注(W)</li></ul></li>
          <li class="twig"><svg class="arrow"><use href="#shut"/></svg><svg class="ic"><use href="#fold"/></svg>CAD识别</li>
        </ul>
        <div class="vs d-flex flex-column align-items-center flex-shrink-0">
          <svg class="my-1" width="14" height="14"><use href="#up"/></svg>
          <div class="flex-fill"></div><div class="thumb w-100" style="height:45%"></div>
          <svg class="my-1" width="14" height="14"><use href="#dn"/></svg>
        </div>
      </div>
      <div class="hs d-flex align-items-center flex-shrink-0"><svg class="me-1" width="14" height="14"><use href="#lt"/></svg><div class="thumb h-100" style="width:102px"></div><svg class="ms-2" width="14" height="14"><use href="#rt"/></svg></div>
    </div>
    <button class="btn fold">单构件输入</button>
    <button class="btn fold">报表预览</button>
  </aside>

  <section class="d-flex flex-column flex-fill" style="min-width:0">
    <div class="d-flex flex-shrink-0" style="height:27px">
      <div class="strip d-flex align-items-center">
        <span class="grip"></span>
        <button class="btn tb" disabled><svg class="ic"><use href="#brush"/></svg>删除</button><span class="vsep"></span>
        <button class="btn tb" disabled><svg class="ic"><use href="#copy"/></svg>复制</button>
        <button class="btn tb" disabled><svg class="ic"><use href="#mir"/></svg>镜像</button><span class="vsep"></span>
        <button class="btn tb" disabled><svg class="ic"><use href="#move"/></svg>移动</button>
        <button class="btn tb" disabled><svg class="ic"><use href="#spin"/></svg>旋转</button><span class="vsep"></span>
        <button class="btn tb" disabled><svg class="ic"><use href="#ext"/></svg>延伸</button>
        <button class="btn tb" disabled><svg class="ic"><use href="#trim"/></svg>修剪</button><span class="vsep"></span>
        <button class="btn tb" disabled><svg class="ic"><use href="#brk"/></svg>打断</button>
        <button class="btn tb" disabled><svg class="ic"><use href="#mrg"/></svg>合并</button>
        <button class="btn tb" disabled><svg class="ic"><use href="#split"/></svg>分割</button><span class="vsep"></span>
        <button class="btn tb off" disabled><svg class="ic"><use href="#align"/></svg>对齐<span class="car tight"></span></button>
        <button class="btn tb" disabled><svg class="ic"><use href="#off1"/></svg>偏移</button>
        <button class="btn tb" disabled><svg class="ic"><use href="#str"/></svg>拉伸</button><span class="vsep"></span>
        <button class="btn tb" disabled><svg class="ic"><use href="#clip"/></svg>设置夹点</button>
      </div>
    </div>
    <div class="d-flex flex-shrink-0" style="height:28px">
      <div class="strip d-flex align-items-center">
        <span class="grip"></span>
        <select class="form-select pick narrow" aria-label="楼层"><option>第6层</option></select>
        <select class="form-select pick" aria-label="构件大类"><option>自定义</option></select>
        <select class="form-select pick" aria-label="构件类型"><option>自定义线</option></select>
        <select class="form-select pick" aria-label="构件名称"><option>ZDYX-80</option></select>
        <span class="vsep ms-1"></span>
        <button class="btn tb"><svg class="ic"><use href="#prop"/></svg>属性</button>
        <button class="btn tb on"><svg class="ic"><use href="#edit"/></svg>编辑钢筋</button>
        <button class="btn tb"><svg class="ic"><use href="#list"/></svg>构件列表</button>
        <button class="btn tb"><svg class="ic"><use href="#drop"/></svg>拾取构件</button>
      </div>
      <div class="strip d-flex align-items-center ms-auto" style="margin-right:133px">
        <span class="grip"></span>
        <button class="btn tb"><svg class="ic"><use href="#ax2"/></svg>两点</button>
        <button class="btn tb"><svg class="ic"><use href="#axp"/></svg>平行</button>
        <button class="btn tb"><svg class="ic"><use href="#axa"/></svg>点角<span class="car"></span></button>
        <button class="btn tb"><svg class="ic"><use href="#ax3"/></svg>三点辅轴<span class="car"></span></button>
        <button class="btn tb"><svg class="ic"><use href="#delax"/></svg>删除辅轴</button>
        <button class="btn tb"><svg class="ic"><use href="#dim"/></svg>长度标注<span class="car"></span></button>
      </div>
    </div>
    <div class="d-flex flex-shrink-0 align-items-center" style="height:29px">
      <div class="strip d-flex align-items-center">
        <span class="grip"></span>
        <button class="btn tb"><svg class="ic"><use href="#cur"/></svg>选择<span class="car"></span></button><span class="vsep"></span>
        <button class="btn tb"><svg class="ic"><use href="#line"/></svg>直线</button>
        <button class="btn tb"><svg class="ic"><use href="#ptlen"/></svg>点加长度</button>
        <button class="btn tb"><svg class="ic"><use href="#arc"/></svg>三点画弧<span class="car"></span></button>
        <select class="form-select pick narrow" aria-label="画弧方式"><option></option></select>
        <button class="btn tb"><svg class="ic"><use href="#rect"/></svg>矩形</button><span class="vsep"></span>
        <button class="btn tb"><svg class="ic"><use href="#smart"/></svg>智能布置<span class="car tight"></span></button>
      </div>
      <div class="strip d-flex align-items-center ms-auto" style="margin-right:104px;width:31px"><span class="grip ms-1"></span></div>
    </div>

    <div class="scene flex-fill position-relative overflow-hidden">
      <svg width="100%" height="100%" viewBox="170 168 1196 305" preserveAspectRatio="xMidYMid slice" fill="none" shape-rendering="crispEdges">
        <g stroke="#800000">
          <path d="M173 467L597 233M228 472L597 268M248 472L597 280M440 174L503 212M527 268L508 340M689 472L918 347M797 395L925 472M875 472L1366 203M925 472L1366 230M1037 472L1366 292M1077 257L1220 178M1311 178L1366 211M618 448L613 472M597 271L614 281M546 463L542 473"/>
        </g>
        <path stroke="#f00" d="M195 472L597 250M347 260L492 349M640 442L689 472M843 472L1366 184M1285 472L1366 429M1302 219L1366 260"/>
        <path stroke="#008000" d="M552 168L528 264M517 210L572 187M545 198L597 203M584 216L597 211M1228 184q4 10 14 9M173 170q8 12 20 0"/>
        <text x="568" y="199" transform="rotate(48 568 199)" font-family="Liberation Sans" font-size="15" fill="#c8c8c8" shape-rendering="auto">600</text>
        <path fill="#009600" d="M346 168H417L346 205zM172 232L477 419V473H460L172 294z"/>
        <path fill="#b2b2b2" d="M346 196L386 177V185L346 208zM235 168h45v4h-45z"/>
        <path fill="#00e600" d="M346 208L417 168H432L346 215zM172 231L200 210L346 300L486 387L493 410L477 419zM280 168h70v4h-70z"/>
        <path fill="#00b400" d="M346 215L432 168H449L346 225zM477 419L493 410V473H477z"/>
        <path fill="#e4e4e4" d="M170 201L182 196V216L170 208z"/><path fill="#969696" d="M170 209L182 216V226L172 230V265H170z"/>
        <path stroke="#fff" stroke-width="1.500" d="M170 413L517 222M503 213L595 270M517 215V228M509 216L517 222M170 467l10 6"/>
        <path fill="#6e6e6e" d="M597 168H612V280L597 270z"/><path fill="#848484" d="M612 168H711L762 200L614 281z"/>
        <path fill="#009600" d="M711 168H820L762 200z"/>
        <path fill="#005500" d="M502 415L947 168H1064L950 231L773 330L683 358L560 395z"/>
        <path fill="#007000" d="M502 415L947 168H966L560 395zM1033 168H1047L950 222L770 322L640 376L700 350L950 214z"/>
        <path fill="#00b400" d="M827 240L869 215V266z"/><path fill="#00cd00" d="M869 215L894 200V227L886 230V240L894 243V252L869 266z"/><path fill="#00b400" d="M869 215L894 201V226L886 230V256L869 262z"/>
        <path fill="#969696" d="M486 353L502 362V414L486 405z"/>
        <path fill="#e4e4e4" d="M486 353L820 168H853L502 362z"/>
        <path fill="#b2b2b2" d="M502 362L853 168H947L502 414z"/>
        <path stroke="#5ad25a" stroke-width="2" d="M502 414L948 168"/>
        <path fill="#007000" d="M494 430L502 415L560 387L683 358L773 328L860 298L960 249L1003 228L1083 175L1092 168H1191L1137 215L1077 257L1013 295L960 325L918 347L853 374L793 395L720 417L640 442L560 460L507 473H493z"/>
        <path fill="#005500" d="M520 473L570 435L660 405L737 375L829 338L918 298L1000 258L1076 211L1127 168H1191L1137 215L1077 257L1013 295L960 325L918 347L853 374L793 395L720 417L640 442L560 460z"/>
        <path fill="#00a000" d="M494 430L502 415L560 387L683 358L773 328L700 368L600 402L530 440L498 447z"/>
        <path fill="#008700" d="M493 450L540 440L640 405L600 430L530 458L493 473z"/>
        <path stroke="#004c00" stroke-width="3" stroke-dasharray="2 2" d="M502 417L590 372"/>
        <g id="cage"></g>
        <path fill="#6e6e6e" d="M1204 168H1294V223z"/><path fill="#848484" d="M1294 168H1310V215L1294 223z"/>
        <g stroke="#fff" stroke-opacity=".5"><circle cx="767" cy="320" r="135"/><circle cx="767" cy="185" r="8.500"/><circle cx="632" cy="320" r="8.500"/><circle cx="902" cy="320" r="8.500"/><circle cx="767" cy="456" r="8.500"/></g>
        <g stroke="#008000"><circle cx="217" cy="460" r="12.500"/><circle cx="866" cy="460" r="12.500"/><circle cx="1308" cy="460" r="12.500"/></g>
        <g font-family="Liberation Mono" font-size="15" fill="#e0e0e0" shape-rendering="auto" text-anchor="middle"><text x="218" y="465">D</text><text x="866" y="465">C</text><text x="1308" y="465">B</text></g>
        <path stroke="red" d="M214 463L223 458M862 462L870 457M1304 462L1312 458"/>
        <path stroke="#00f000" stroke-width="3" d="M225 422L198 407"/><path fill="#00f000" d="M191 402l10 1-5 8z"/>
        <path stroke="red" stroke-width="3" d="M225 422L254 407"/><path fill="red" d="M261 403l-10 0 4 8z"/>
        <path stroke="#007fff" stroke-width="4" d="M225 422V392"/><path fill="#007fff" d="M225 382l4 12h-8z"/>
        <path stroke="#007fff" d="M215 382h9l-9 10h9"/><path stroke="#00c000" d="M203 395l4 4 4-4M207 399v5"/><path stroke="red" d="M240 395l9 9M249 395l-9 9"/>
      </svg>
      <div class="float position-absolute d-flex flex-column song">
        <h2>钢筋显示控制面板</h2>
        <div class="box flex-fill">
          <label class="opt"><input type="checkbox" class="form-check-input" checked>水平纵筋</label>
          <label class="opt"><input type="checkbox" class="form-check-input" checked>横向钢筋</label>
          <label class="opt"><input type="checkbox" class="form-check-input" checked>显示其它图元</label>
          <label class="opt"><input type="checkbox" class="form-check-input" checked>显示详细公式</label>
        </div>
      </div>
    </div>

    <div class="snap d-flex flex-shrink-0">
      <div class="strip d-flex align-items-center"><span class="grip"></span>
        <button class="btn tb"><svg class="ic"><use href="#ortho"/></svg>正交</button>
        <button class="btn tb on"><svg class="ic"><use href="#osnap"/></svg>对象捕捉</button>
        <button class="btn tb"><svg class="ic"><use href="#dyn"/></svg>动态输入</button>
      </div>
      <div class="strip d-flex align-items-center"><span class="grip"></span>
        <button class="btn tb"><svg class="ic"><use href="#inter"/></svg>交点</button>
        <button class="btn tb on"><svg class="ic"><use href="#perp"/></svg>垂点</button>
        <button class="btn tb on"><svg class="ic"><use href="#mid"/></svg>中点</button>
        <button class="btn tb"><svg class="ic"><use href="#vert"/></svg>顶点</button>
        <button class="btn tb"><svg class="ic"><use href="#coord"/></svg>坐标</button>
      </div>
      <div class="strip d-flex align-items-center"><span class="grip"></span>
        <select class="form-select pick narrow" aria-label="偏移方式"><option>不偏移</option></select>
        <span class="vsep"></span>
        <label class="unit ps-0" for="ox">X=</label>
        <div class="num d-flex align-items-center"><input id="ox" type="number" value="0"><svg width="12" height="19" fill="#666"><path d="M3 5l3-3 3 3zM3 14l3 3 3-3z"/></svg></div>
        <span class="unit">mm</span><label class="unit" for="oy">Y=</label>
        <div class="num d-flex align-items-center"><input id="oy" type="number" value="0"><svg width="12" height="19" fill="#666"><path d="M3 5l3-3 3 3zM3 14l3 3 3-3z"/></svg></div>
        <span class="unit">mm</span>
        <span class="vsep"></span>
        <input type="checkbox" class="form-check-input sq" id="rt1"><label for="rt1" class="ms-2 me-1">旋转</label>
        <div class="num wide d-flex align-items-center"><input aria-label="旋转角度" value="0.000"><svg width="12" height="19" fill="#666"><path d="M3 5l3-3 3 3zM3 14l3 3 3-3z"/></svg></div>
        <span class="unit">°</span>
      </div>
    </div>

    <div class="sheet d-flex flex-shrink-0">
      <div class="rail flex-shrink-0 d-flex flex-column">
        <button class="btn p-0 border-0 rounded-0 lh-1" aria-label="关闭面板"><svg width="10" height="10" fill="none" stroke="#333"><path d="M.500.500h9v9h-9zM2 3l6 5M8 3L2 8"/><path d="M0 1h10" stroke="#a33"/></svg></button>
        <div class="dots flex-fill mt-1"></div>
      </div>
      <div class="d-flex flex-column flex-fill" style="min-width:0">
        <div class="strip d-flex align-items-center flex-shrink-0 ps-1">
          <button class="btn tb" aria-label="首条"><svg class="ic"><use href="#first"/></svg></button>
          <button class="btn tb" aria-label="上一条"><svg class="ic"><use href="#prev"/></svg></button>
          <button class="btn tb" aria-label="下一条"><svg class="ic"><use href="#next"/></svg></button>
          <button class="btn tb" aria-label="末条"><svg class="ic"><use href="#end"/></svg></button>
          <span class="vsep"></span>
          <button class="btn tb" aria-label="上移"><svg class="ic"><use href="#aup"/></svg></button>
          <button class="btn tb" aria-label="下移"><svg class="ic"><use href="#adn"/></svg></button>
          <span class="vsep"></span>
          <button class="btn tb" disabled><svg class="ic"><use href="#ins"/></svg>插入</button>
          <button class="btn tb" disabled><svg class="ic"><use href="#rem"/></svg>删除</button>
          <button class="btn tb" disabled><svg class="ic"><use href="#scl"/></svg>缩尺配筋</button>
          <button class="btn tb"><svg class="ic"><use href="#info"/></svg>钢筋信息</button>
          <button class="btn tb"><svg class="ic"><use href="#lib"/></svg>钢筋图库</button>
          <button class="btn tb"><svg class="ic"><use href="#oth"/></svg>其他<span class="car tight"></span></button>
          <button class="btn tb ms-1">关闭</button>
          <span class="vsep"></span>
          <span class="text-nowrap">单构件钢筋总重(kg)：24.323</span>
        </div>
        <div class="frame flex-fill d-flex flex-column">
          <div class="d-flex flex-fill overflow-hidden" style="min-height:0">
            <div class="flex-fill overflow-hidden" style="min-width:0">
              <table class="grid">
                <colgroup><col class="c33"><col class="c73"><col class="c56"><col class="c36"><col class="c33"><col class="c201"><col class="c166"><col class="c156"><col class="c61"><col class="c189"><col class="c39"><col class="c49"><col class="c61"><col class="c61"></colgroup>
                <thead><tr><th></th><th>筋号</th><th>直径(mm)</th><th>级别</th><th>图号</th><th class="cur">图形</th><th>计算公式</th><th>公式描述</th><th>长度(mm)</th><th>根数</th><th>搭接</th><th>损耗(%)</th><th>单重(kg)</th><th>总重(kg)</th></tr></thead>
                <tbody>
                <tr><th class="cur">1*</th><td class="lock">横向钢筋.1</td><td>8</td><td><svg class="m-auto" width="10" height="10"><use href="#grade"/></svg></td><td>0</td>
                  <td class="hit p-0"><svg width="200" height="60"><path d="M58 57V9H144V22" fill="none" stroke="#000" stroke-width="2"/><text x="133" y="13">595</text><text transform="translate(44 11) rotate(90)">280</text><text transform="translate(149 5) rotate(90)">90</text></svg></td>
                  <td>596+40*d</td><td>净长+端头</td><td>876</td><td>8</td><td>0</td><td>0</td><td>0.346</td><td>2.768</td></tr>
                <tr><th>2</th><td class="lock">横向钢筋.2</td><td>8</td><td><svg class="m-auto" width="10" height="10"><use href="#grade"/></svg></td><td>0</td>
                  <td class="p-0"><svg width="200" height="60"><path d="M58 57V9H144V22" fill="none" stroke="#000" stroke-width="2"/><text x="133" y="13">595</text><text transform="translate(44 11) rotate(90)">280</text><text transform="translate(149 5) rotate(90)">90</text></svg></td>
                  <td>596+280</td><td>净长+端头</td><td>876</td><td>46</td><td>0</td><td>0</td><td>0.346</td><td>15.916</td></tr>
                <tr class="last"><th>3</th><td class="lock">水平纵筋.1</td><td>8</td><td><svg class="m-auto" width="10" height="10"><use href="#grade"/></svg></td><td>1</td><td class="alert-num">10505</td><td>10787</td><td>净长</td><td>10787</td><td>1</td><td>384</td><td>0</td><td>2.648</td><td>2.648</td></tr>
                </tbody>
              </table>
            </div>
            <div class="vs d-flex flex-column align-items-center flex-shrink-0"><svg class="my-1 flex-shrink-0" width="14" height="14"><use href="#up"/></svg><div class="thumb w-100" style="height:20px"></div><svg class="mt-auto" width="14" height="14"><use href="#dn"/></svg></div>
          </div>
          <div class="hs d-flex align-items-center flex-shrink-0"><svg class="me-1" width="14" height="14"><use href="#lt"/></svg><div class="thumb h-100" style="width:58%"></div><svg class="ms-auto me-3" width="14" height="14"><use href="#rt"/></svg></div>
        </div>
      </div>
    </div>
  </section>
</main>

<footer class="status d-flex song flex-shrink-0">
  <span class="s148">X=14594 Y=9992</span><span class="s78">层高:2.8m</span><span class="s98">底标高:17.55m</span><span class="s50">1(1)</span><span class="flex-fill"></span><span class="s70">250.6 FPS</span>
</footer>

<div class="task d-flex align-items-center flex-shrink-0">
  <button class="btn start" aria-label="开始"><svg width="17" height="17" fill="#fff"><path d="M0 2l7-1v7H0zM8 1l9-1v8H8zM0 9h7v7l-7-1zM8 9h9v8l-9-1z"/></svg></button>
  <div class="find d-flex align-items-center h-100 flex-shrink-0">
    <svg width="24" height="24"><circle cx="12" cy="12" r="9" fill="none" stroke="#fff" stroke-width="3"/></svg>
    <input class="flex-fill" type="text" placeholder="在这里输入你要搜索的内容" aria-label="搜索">
    <svg width="16" height="18" fill="none" stroke="#bbb"><rect x="5.500" y="1.500" width="5" height="10" rx="2"/><path d="M2.500 8v3c0 4 11 4 11 0V8M8 14v3M5 17h6"/></svg>
  </div>
  <button class="btn" aria-label="任务视图"><svg width="22" height="16" fill="none" stroke="#fff"><path d="M5.500 1.500h11v13h-11zM3 3.500H1.500v9H3M19 3.500h1.500v9H19"/></svg></button>
  <button class="btn w50" aria-label="浏览器"><svg class="g24" viewBox="0 0 24 24" fill="#eee"><path d="M12 12C8 12 2 10 2 6s7-5 10-2zM12 12c0-4 2-10 6-10s6 7 2 10zM12 12c4 0 10 2 9 6s-7 5-9 2zM12 12c0 4-2 10-6 10s-6-7-2-10z"/><path d="M5 12h14M12 5v14" stroke="#0a1418"/></svg></button>
  <button class="btn w50" aria-label="IE"><svg class="g24" viewBox="0 0 24 24" fill="none" stroke="#eee"><path d="M6 12h13c0-9-13-9-13 0s10 8 13 3" stroke-width="4"/><path d="M22 3c-2-3-14 3-19 18" stroke-width="1.500"/></svg></button>
  <button class="btn w50" aria-label="广联达"><svg width="20" height="20" fill="none" stroke="#ddd" stroke-width="2"><path d="M15 3C8-1 1 5 2 12s11 9 15 1l-2-4-4 1v4M13 6C8 4 6 8 6 11"/></svg></button>
  <span style="width:22px" class="d-flex justify-content-center flex-shrink-0"><svg width="4" height="16" stroke="#555"><path d="M.500 0v16M3.500 0v16"/></svg></span>
  <button class="btn" aria-label="Edge"><svg class="g24" viewBox="0 0 24 24" fill="none"><path d="M3 11C5-1 20 1 20 12H8c0 9 8 9 12 6" stroke="#0f78d8" stroke-width="4"/></svg></button>
  <button class="btn" aria-label="Internet Explorer"><svg class="g24" viewBox="0 0 24 24" fill="none"><path d="M6 12h13c0-9-13-9-13 0s10 8 13 3" stroke="#35a3e8" stroke-width="4"/><path d="M22 5c1-6-16 2-20 17 4 1 7-2 9-4" stroke="#f2c230" stroke-width="2"/></svg></button>
  <button class="btn" aria-label="文件管理器"><svg class="g24" viewBox="0 0 24 24"><path d="M2 3h7l2 2h11v15H2z" fill="#f5d575"/><path d="M6 12h12v9h-4v-5h-4v5H6z" fill="#38a6dd"/><path d="M2 7h20" stroke="#fff2b8"/></svg></button>
  <button class="btn run" aria-label="记事"><svg class="g24" viewBox="0 0 24 24"><rect width="24" height="24" rx="2" fill="#f29a1d"/><path d="M4 4h12v17H4z" fill="#fff8e2"/><path d="M6 8h7M6 11h7M6 14h6" stroke="#a76218"/><path d="M20 3l-8 14-2 3 1-5 7-13z" fill="#8c3a17"/></svg></button>
  <button class="btn now" aria-label="广联达钢筋"><svg class="g24" viewBox="0 0 16 16"><use href="#app"/></svg></button>
  <button class="btn run" aria-label="安全浏览器"><svg class="g24" viewBox="0 0 24 24" fill="none"><circle cx="12" cy="12" r="11" fill="#52b52c"/><path d="M7 12h10c0-7-10-7-10 0s8 6 10 3" stroke="#fff" stroke-width="3"/><path d="M21 3C15 3 6 12 4 20" stroke="#e8ffd8" stroke-width="1.500"/></svg></button>
  <button class="btn run" aria-label="加速"><svg class="g24" viewBox="0 0 24 24" fill="none"><path d="M20 5C12-1 3 5 4 13s11 10 15 3l1-5h-7" stroke="#1b9bf0" stroke-width="5"/></svg></button>
  <button class="btn run" aria-label="图库"><svg class="g24" viewBox="0 0 24 24"><rect width="24" height="24" rx="3" fill="#1c7fd6"/><path d="M3 8l9 2 9-2v12l-9-2-9 2z" fill="#f5f9ff"/><circle cx="14" cy="9" r="4" fill="#bfe1ff" stroke="#567"/><path d="M7 4h4v5H7z" fill="#f3b53c"/></svg></button>
  <svg class="ms-auto me-2" width="4" height="16" stroke="#555"><path d="M.500 0v16M3.500 0v16"/></svg>
  <span class="me-1">链接</span>
  <button class="btn tray" aria-label="展开"><svg width="14" height="9" fill="none" stroke="#fff" stroke-width="1.500"><path d="M1 8l6-6 6 6"/></svg></button>
  <button class="btn tray" aria-label="电源"><svg width="17" height="14" fill="none" stroke="#fff"><path d="M5 4.500h9.500v7h-11V9M15 7h2M1 1v3h4V1M3 4v4"/><path d="M7 6h6v4H7z" fill="#fff"/></svg></button>
  <button class="btn tray" aria-label="网络"><svg width="14" height="14" fill="none" stroke="#ccc" stroke-width="1.500"><path d="M1 13C1 6 6 1 13 1M5 13c0-5 3-8 8-8M9 13c0-2 1-4 4-4"/><circle cx="12" cy="12" r="1" fill="#fff"/></svg></button>
  <button class="btn tray" aria-label="音量"><svg width="17" height="14" fill="none" stroke="#fff"><path d="M1 5h3l4-4v12L4 9H1zM10 5q2 2 0 4M12 3q4 4 0 8M14 1q5 6 0 12"/></svg></button>
  <button class="btn tray mx-1" aria-label="键盘"><svg width="23" height="14" fill="none" stroke="#fff"><path d="M.500.500h22v13H.500z"/><path d="M3 4.500h17M3 7.500h17" stroke-dasharray="2 1"/><path d="M6 10.500h11"/></svg></button>
  <button class="btn tray">中</button>
  <button class="btn tray mx-1" aria-label="搜狗"><svg width="16" height="16"><use href="#sogou"/></svg></button>
  <time class="clock text-center">22:22<br>2018/5/3</time>
  <button class="btn tray note" aria-label="通知"><svg width="17" height="17" fill="none" stroke="#fff"><path d="M.500 1.500h16v11H11L8 15.500 6 12.500H.500z"/></svg></button>
</div>

<script src="https://cdn.jsdelivr.net/npm/bootstrap@5.3.0/dist/js/bootstrap.bundle.min.js"></script>
<script>
/* Stirrup stations of the curved rebar cage: back corner and front corner of each. */
const back=[[498,418],[536,411],[587,401],[638,388],[688,376],[737,362],[783,346],[829,328],[875,311],[918,292],[960,272],[1000,251],[1038,228],[1076,204],[1112,180],[1146,157]];
const front=[[510,437],[547,430],[598,419],[651,407],[702,393],[752,378],[801,362],[848,345],[894,327],[938,308],[982,285],[1023,264],[1063,242],[1101,217],[1137,192],[1171,168]];
const peaks=[[515,402],[535,398],[555,394],[575,389],[596,384],[617,379],[637,374],[657,369],[676,364],[696,358],[714,353],[733,347],[752,341],[772,334],[791,327],[808,320],[827,314],[844,306],[863,299],[881,292],[898,284],[915,276],[932,268],[948,259],[963,251],[979,242],[1002,230],[1018,221],[1033,212],[1047,203],[1062,193],[1076,183],[1089,174],[1103,165]];
const run=(p,dy)=>'M'+p.map(([x,y])=>x+' '+(y+dy)).join('L');
const mid=(a,b,t)=>[Math.round(a[0]+(b[0]-a[0])*t),Math.round(a[1]+(b[1]-a[1])*t)];
let hoops='',ties='',spikes='';
back.forEach(([x,y],i)=>{
  const [u,v]=front[i];
  hoops+=`M${x} ${y}L${u} ${v}V${v+10}L${x} ${y+10}z`;
  if(i<15)for(const t of [.33,.67]){
    const a=mid(back[i],back[i+1],t),b=mid(front[i],front[i+1],t);
    ties+=`M${a[0]} ${a[1]+10}V${a[1]}L${b[0]} ${b[1]}V${b[1]+10}`;
  }
});
peaks.forEach(([x,y])=>spikes+=`M${x} ${y+18}V${y}L${x+13} ${y+15}`);
document.getElementById('cage').innerHTML=
 `<path stroke="#4fb84f" d="${spikes}"/><path stroke="#9a8f88" d="${ties}${run(back,11)}"/>`+
 `<path stroke="#9dff9d" stroke-width="1.500" d="${run(back,0)}"/>`+
 `<path stroke="#fff" stroke-width="1.500" d="${hoops}${run(front,0)}${run(front,10)}"/>`;
</script>
</body>
</html>
